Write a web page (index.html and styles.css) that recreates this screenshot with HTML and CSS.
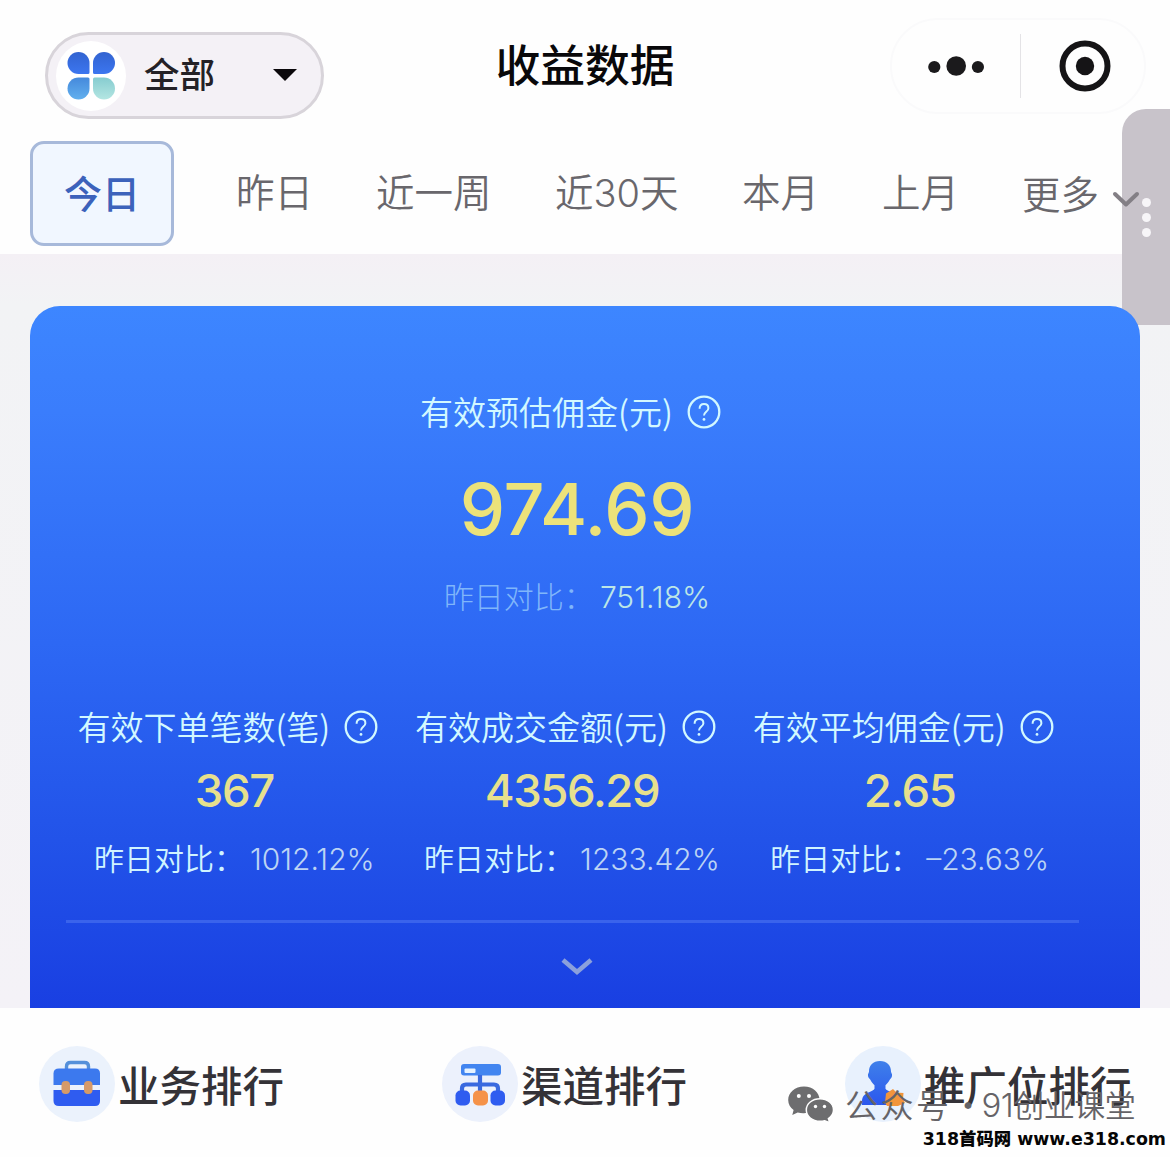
FILE: index.html
```html
<!DOCTYPE html>
<html lang="zh-CN">
<head>
<meta charset="utf-8">
<title>收益数据</title>
<link rel="stylesheet" href="styles.css">
</head>
<body>
<svg class="defs" width="0" height="0" aria-hidden="true">
  <defs>
    <linearGradient id="blue" x1="0" y1="0" x2="0" y2="1"><stop offset="0" stop-color="#3f80ea"/><stop offset="1" stop-color="#2b57ee"/></linearGradient>
    <linearGradient id="petal" x1="0" y1="0" x2="0" y2="1"><stop offset="0" stop-color="#3263d0"/><stop offset="1" stop-color="#3c76f0"/></linearGradient>
    <linearGradient id="sky" x1="0" y1="0" x2="0" y2="1"><stop offset="0" stop-color="#4589dc"/><stop offset="1" stop-color="#62b0ee"/></linearGradient>
    <linearGradient id="mint" x1="0" y1="0" x2="0" y2="1"><stop offset="0" stop-color="#86ccd0"/><stop offset="1" stop-color="#b4e6e2"/></linearGradient>
    <symbol id="help" viewBox="0 0 34 34">
      <circle cx="17" cy="17" r="15.3" fill="none" stroke="currentColor" stroke-width="2.3"/>
      <path d="M12.6 13.7c0-2.8 1.8-4.6 4.4-4.6s4.4 1.7 4.4 4.1c0 3.6-4.4 3.7-4.4 7.3" fill="none" stroke="currentColor" stroke-width="2"/>
      <circle cx="17" cy="24.4" r="1.4" fill="currentColor"/>
    </symbol>
  </defs>
</svg>
<header class="topbar">
  <div class="picker">
    <span class="picker-icon">
      <svg width="48" height="48" viewBox="0 0 48 48">
        <path d="M11.500 0A11 11 0 0 1 22.500 11V20.500Q22.500 22 21 22H11.500A11 11 0 0 1 11.500 0z" fill="url(#petal)"/>
        <path d="M37 0A11 11 0 0 0 26 11V20.500Q26 22 27.500 22H37A11 11 0 0 0 37 0z" fill="url(#petal)"/>
        <path d="M11.500 47.500A11 11 0 0 0 22.500 36.500V27Q22.500 25.500 21 25.500H11.500A11 11 0 0 0 11.500 47.500z" fill="url(#sky)"/>
        <path d="M37 47.500A11 11 0 0 1 26 36.500V27Q26 25.500 27.500 25.500H37A11 11 0 0 1 37 47.500z" fill="url(#mint)"/>
      </svg>
    </span>
    <span class="picker-text">全部</span>
    <svg class="caret" width="24" height="12" viewBox="0 0 24 12"><path d="M0 0H24L12 12z" fill="#0a080b"/></svg>
  </div>
  <h1 class="title">收益数据</h1>
  <div class="capsule">
    <svg class="more" width="56" height="20" viewBox="0 0 56 20" fill="#1b1a1c"><circle cx="6.3" cy="11" r="6.1"/><circle cx="28.2" cy="10" r="9.8"/><circle cx="49.9" cy="11" r="6.1"/></svg>
    <span class="capsule-line"></span>
    <svg width="52" height="52" viewBox="0 0 52 52"><circle cx="26" cy="26" r="22.5" fill="none" stroke="#151416" stroke-width="6"/><circle cx="26" cy="26" r="9.2" fill="#151416"/></svg>
  </div>
</header>
<nav class="tabs">
  <span class="tab tab-active">今日</span>
  <span class="tab">昨日</span>
  <span class="tab">近一周</span>
  <span class="tab">近<span class="num">30</span>天</span>
  <span class="tab">本月</span>
  <span class="tab">上月</span>
  <span class="tab tab-more">更多</span>
</nav>
<div class="side-tab"><i></i><i></i><i></i></div>
<svg class="more-arrow" width="28" height="18" viewBox="0 0 28 18"><path d="M3 3L14 13.500L25 3" fill="none" stroke="#837f85" stroke-width="4" stroke-linecap="round" stroke-linejoin="round"/></svg>
<main class="content">
  <section class="card">
    <div class="summary">
      <div class="label">有效预估佣金(元)<svg class="help"><use href="#help"/></svg></div>
      <div class="amount">974.69</div>
      <div class="compare compare-main"><span>昨日对比：</span><span class="rate rate-main">751.18%</span></div>
    </div>
    <div class="stats">
      <div class="stat">
        <div class="label">有效下单笔数(笔)<svg class="help"><use href="#help"/></svg></div>
        <div class="value">367</div>
        <div class="compare"><span>昨日对比：</span><span class="rate">1012.12%</span></div>
      </div>
      <div class="stat">
        <div class="label">有效成交金额(元)<svg class="help"><use href="#help"/></svg></div>
        <div class="value">4356.29</div>
        <div class="compare"><span>昨日对比：</span><span class="rate">1233.42%</span></div>
      </div>
      <div class="stat">
        <div class="label">有效平均佣金(元)<svg class="help"><use href="#help"/></svg></div>
        <div class="value">2.65</div>
        <div class="compare"><span>昨日对比：</span><span class="rate">–23.63%</span></div>
      </div>
    </div>
    <div class="expand">
      <svg width="34" height="20" viewBox="0 0 34 20"><path d="M3 3L17 15L31 3" fill="none" stroke="#8ba0dc" stroke-width="4.600"/></svg>
    </div>
  </section>
</main>
<footer class="ranks">
  <div class="rank">
    <svg width="76" height="76" viewBox="0 0 76 76">
      <circle cx="38" cy="38" r="38" fill="#ebf2fc"/>
      <path d="M27.500 25v-4.500q0-4 4-4h14q4 0 4 4V25" fill="none" stroke="#5590da" stroke-width="3.4"/>
      <path d="M20 22.500H56q5 0 5 5V39H14.500V27.500q0-5 5.500-5z" fill="#3c79ee"/>
      <path d="M14.500 44H61V55q0 5-5 5H20q-5.500 0-5.500-5z" fill="#2f5cf0"/>
      <rect x="22.500" y="35" width="8.500" height="13" rx="4" fill="#d69a68"/><rect x="45" y="35" width="8.500" height="13" rx="4" fill="#d69a68"/>
    </svg>
    <span>业务排行</span>
  </div>
  <div class="rank">
    <svg width="76" height="76" viewBox="0 0 76 76">
      <circle cx="38" cy="38" r="38" fill="#ecf1fc"/>
      <rect x="19" y="18" width="40" height="11.500" rx="3" fill="#4285f0"/><rect x="22.500" y="22.500" width="11" height="4.500" rx="1" fill="#e6f3ff"/>
      <path d="M38 29V49M20 48V42.500q0-4 4-4H52q4 0 4 4V48" fill="none" stroke="#3969df" stroke-width="4.200"/>
      <rect x="13.500" y="44.500" width="14.500" height="15" rx="5" fill="#2f5cf0"/><rect x="31" y="44.500" width="15" height="15" rx="5" fill="#f59249"/><rect x="48.500" y="44.500" width="14.500" height="15" rx="5" fill="#2f5cf0"/>
    </svg>
    <span>渠道排行</span>
  </div>
  <div class="rank">
    <svg width="76" height="76" viewBox="0 0 76 76">
      <circle cx="38" cy="38" r="38" fill="#e8f1fd"/>
      <path d="M35 15c7 0 11 4.500 11 10.500 0 1.500 1.500 2 1 4.500-.3 2-1.600 2.500-2.400 4-1.100 2.200-2.400 3.700-4.100 5.200v3.500c1.500 2.500 9.500 3.500 12.500 7.500 1.200 2 1.500 5 1 8.800H17c-.5-3.800 0-6.800 1.500-9 3-3.800 9.500-4.800 11-7.300v-3.500c-1.600-1.500-3-3-4-5.200-.8-1.500-2.200-2-2.500-4-.4-2.500 1-3 1-4.500C24 19.500 28 15 35 15z" fill="url(#blue)"/>
      <path d="M48 43L51.500 46.500 58.500 47 58 53 60 57 53 60H42L40 56.500 41 47.500z" fill="#f2953b"/>
    </svg>
    <span>推广位排行</span>
  </div>
</footer>
<div class="wechat-mark">
  <svg width="46" height="37" viewBox="0 0 46 37">
    <path d="M16 .5C7 .5.2 6.500.2 14c0 4.300 2.100 7.700 5.400 10L4.300 29l5.400-2.600c2 .6 4 .9 6.300.8C24.500 27 31.500 21 31.500 13.800S25 .5 16 .5z" fill="#6d6d6f"/>
    <circle cx="10.800" cy="10" r="2" fill="#fff"/><circle cx="21" cy="10" r="2" fill="#fff"/>
    <path d="M32 12.800c-7.700 0-13.700 4.900-13.700 11.200s6 11.300 13.700 11.300c1.700 0 3.200-.2 4.700-.6l5 2.100-1.300-4.200c3.200-2.100 5.100-5.200 5.100-8.600 0-6.300-6-11.200-13.500-11.200z" fill="#6d6d6f" stroke="#fff" stroke-width="1.500"/>
    <circle cx="27.500" cy="20.500" r="1.700" fill="#fff"/><circle cx="36.500" cy="20.500" r="1.700" fill="#fff"/>
  </svg>
  <span class="mark-kind">公众号</span><span class="mark-dot">·</span><span class="mark-name"><span class="num">91</span>创业课堂</span>
</div>
<div class="site-mark">318首码网 <span>www.e318.com</span></div>
</body>
</html>
```
FILE: styles.css
```css
* { box-sizing: border-box; }
body {
  margin: 0;
  width: 1170px;
  height: 1157px;
  position: relative;
  overflow: hidden;
  display: flex;
  flex-direction: column;
  background: #fefefe;
  font-family: "Noto Sans CJK SC", sans-serif;
}
svg { display: block; flex: none; }
.defs { position: absolute; }
.num, .amount, .value, .rate { font-family: Inter, "Noto Sans CJK SC", sans-serif; }

.topbar {
  height: 130px;
  flex: none;
  display: grid;
  grid-template-columns: 452px 266px 1fr;
  align-items: start;
}
.picker {
  margin: 32px 0 0 45px;
  width: 279px;
  height: 87px;
  border: 3px solid #d8d4da;
  border-radius: 44px;
  background: #f4f1f6;
  display: flex;
  align-items: center;
  padding-left: 8px;
}
.picker-icon {
  width: 70px;
  height: 70px;
  border-radius: 50%;
  background: #fff;
  display: flex;
  align-items: center;
  justify-content: center;
}
.picker-text {
  margin-left: 18px;
  width: 129px;
  font-size: 35.500px;
  line-height: 50px;
  font-weight: 500;
  color: #242126;
  margin-top: -5px;
}
.caret { margin-top: -2px; }
.title {
  margin: 31px 0 0;
  font-size: 44.800px;
  line-height: 64px;
  font-weight: 500;
  color: #09080a;
  text-align: center;
}
.capsule {
  margin: 18px 0 0 172px;
  width: 256px;
  height: 96px;
  border: 2px solid #fafafb;
  border-radius: 48px;
  display: flex;
  align-items: center;
  padding-left: 36px;
}
.capsule-line { width: 1px; height: 64px; background: #e4e3e6; margin: 0 38px 0 36px; }

.tabs {
  height: 124px;
  flex: none;
  padding: 11px 0 0 30px;
  display: grid;
  grid-template-columns: 206px 140px 179px 187px 140px 140px 148px;
  align-items: start;
  white-space: nowrap;
}
.tab {
  font-size: 38.500px;
  line-height: 105px;
  color: #69676c;
  font-weight: 350;
  margin-top: -3px;
}
.tab .num { font-size: 38px; font-weight: 350; }
.tab-active {
  margin-top: 0;
  width: 144px;
  height: 105px;
  line-height: 95px;
  font-size: 38px;
  border: 3px solid #a7b9da;
  border-radius: 14px;
  background: #f1f7ff;
  color: #3c62bb;
  font-weight: 500;
  text-align: center;
}
.tab-more { margin-top: -1px; }
.side-tab {
  position: absolute;
  left: 1122px;
  top: 109px;
  width: 48px;
  height: 216px;
  border-radius: 24px 0 0 0;
  background: #c8c3ca;
  display: flex;
  flex-direction: column;
  align-items: center;
  gap: 6px;
  padding-top: 89px;
}
.side-tab i { width: 9px; height: 9px; border-radius: 50%; background: #f7f5f8; }
.more-arrow { position: absolute; left: 1112px; top: 191px; }

.content {
  height: 754px;
  flex: none;
  padding: 52px 30px 0;
  background: linear-gradient(#f4f0f5, #f2f3f5 50px, #f4f2f7);
}
.card {
  position: relative;
  height: 702px;
  border-radius: 30px 30px 0 0;
  background: linear-gradient(#3d86ff, #3a7dfc 15%, #2d68f4 48%, #2253e9 76%, #193fe2);
  padding: 0 61.500px 0 35.500px;
}
.summary { height: 384px; padding: 81px 0 0 10px; text-align: center; }
.label {
  display: flex;
  align-items: center;
  justify-content: center;
  font-size: 33px;
  line-height: 48px;
  font-weight: 350;
  color: #d2f8ff;
  padding-right: 13px;
  white-space: nowrap;
}
.help { width: 34px; height: 34px; margin: 2px 0 0 14px; }
.amount {
  font-size: 72px;
  line-height: 80px;
  font-weight: 500;
  color: #ece27a;
  margin-top: 34px;
  letter-spacing: -0.300px;
}
.compare {
  display: flex;
  justify-content: center;
  font-size: 30px;
  line-height: 44px;
  font-weight: 350;
  color: #d0f4ff;
  white-space: nowrap;
}
.compare > span:first-child { margin-top: -1px; }
.compare-main { margin-top: 25px; color: #80b6fa; font-weight: 300; }
.rate { font-size: 30px; font-weight: 300; color: #bcd4f4; margin: 1px 0 0 6px; }
.rate-main { color: #bde6e6; font-weight: 350; }
.stats { height: 230px; padding-top: 12px; display: grid; grid-template-columns: repeat(3, 1fr); text-align: center; }
.value {
  font-size: 45.500px;
  line-height: 50px;
  font-weight: 500;
  color: #e7e08d;
  letter-spacing: -1.400px;
  margin: 16px 0 20px;
}
.expand {
  height: 88px;
  border-top: 3px solid #3a63ec;
  display: flex;
  justify-content: center;
  padding: 34px 0 0 10px;
}

.ranks {
  flex: 1;
  display: grid;
  grid-template-columns: 403px 403px 1fr;
  padding: 38px 0 0 39px;
  align-items: start;
}
.rank { display: flex; align-items: center; gap: 3px; white-space: nowrap; font-size: 41.500px; line-height: 76px; font-weight: 500; color: #343237; }
.wechat-mark {
  position: absolute;
  left: 788px;
  top: 1080px;
  height: 48px;
  display: flex;
  align-items: center;
  color: #656367;
  font-size: 33px;
  line-height: 48px;
  font-weight: 350;
  white-space: nowrap;
}
.mark-kind { margin-left: 11px; letter-spacing: 2.500px; }
.mark-dot { width: 30px; text-align: center; }
.mark-name { font-size: 31px; letter-spacing: -0.500px; }
.mark-name .num { font-size: 33px; font-weight: 300; }
.site-mark {
  position: absolute;
  right: 4px;
  top: 1127px;
  font-family: "DejaVu Sans", "Noto Sans CJK SC", sans-serif;
  font-size: 17.400px;
  line-height: 24px;
  font-weight: 900;
  color: #050505;
  white-space: nowrap;
}
```
